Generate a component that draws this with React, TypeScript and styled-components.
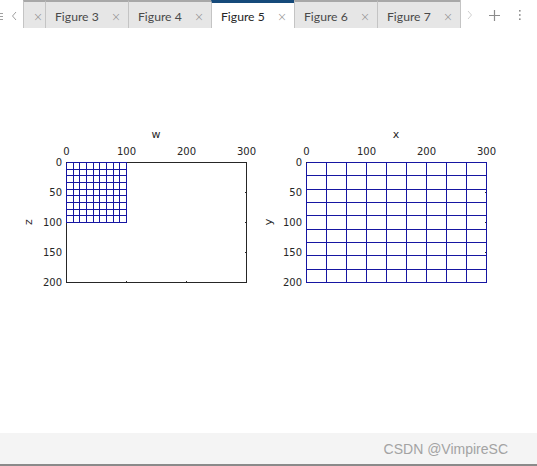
import styled, { createGlobalStyle } from 'styled-components';

const GlobalStyle = createGlobalStyle`
    html, body {
        margin: 0;
        padding: 0;
        background: #ffffff;
    }
    #root {
        height: 100vh;
    }
`;

const Page = styled.div`
    display: flex;
    flex-direction: column;
    height: 100%;
    font-family: Lato, 'Noto Sans', sans-serif;
`;

const TabBar = styled.div`
    display: flex;
    align-items: stretch;
    height: 28px;
    flex-shrink: 0;
    background: #ffffff;
`;

const Nav = styled.div`
    display: flex;
    align-items: center;
    width: 23px;
    overflow: hidden;
`;

const Tab = styled.div<{ active?: boolean; width: number }>`
    box-sizing: border-box;
    display: flex;
    align-items: center;
    justify-content: space-between;
    width: ${({ width }) => width}px;
    padding: ${({ active }) => active ? '2px 7px 0 9px' : '3px 7px 0 9px'};
    background: ${({ active }) => active ? '#ffffff' : '#e6e6e6'};
    border-top: ${({ active }) => active ? '3px solid #164a7a' : '2px solid #a8a8a8'};
    border-left: 1px solid #c4c4c4;
    color: ${({ active }) => active ? '#262626' : '#4a4a4a'};
    font-size: 12.2px;
    white-space: nowrap;
`;

const Close = styled.span`
    color: #8c8c8c;
    font-family: 'DejaVu Sans', sans-serif;
    font-size: 12px;
    font-weight: 300;
`;

const BarButton = styled.div<{ width: number; first?: boolean }>`
    display: flex;
    align-items: center;
    justify-content: center;
    width: ${({ width }) => width}px;
    padding-top: 2px;
    border-left: ${({ first }) => first ? '1px solid #c4c4c4' : 'none'};
`;

const Canvas = styled.main`
    flex: 1;
    display: flex;
    align-items: flex-start;
    padding: 97px 0 0 20px;
    background: #ffffff;
`;

const Footer = styled.footer`
    display: flex;
    align-items: center;
    justify-content: flex-end;
    height: 31px;
    flex-shrink: 0;
    padding-right: 29px;
    background: #f4f4f4;
    border-bottom: 2px solid #8a8a8a;
    color: #a3a3a3;
    font-family: 'Liberation Sans', Arial, sans-serif;
    font-size: 14px;
`;

const ChartSvg = styled.svg`
    display: block;
    font-family: 'DejaVu Sans', sans-serif;
    font-size: 10px;

    text {
        fill: #262626;
    }
`;

const K = 0.6;
const X0 = 46;
const Y0 = 37;

const px = (v: number) => Math.round(X0 + v * K) + 0.5;
const py = (v: number) => Math.round(Y0 + v * K) + 0.5;

const linspace = (a: number, b: number, n: number) =>
    Array.from({ length: n }, (_, i) => a + (b - a) * i / (n - 1));

interface ChartProps {
    title: string;
    yLabel: string;
    xMax: number;
    yMax: number;
}

function Chart({ title, yLabel, xMax, yMax }: ChartProps) {
    const xs = linspace(0, xMax, 10);
    const ys = linspace(0, yMax, 10);
    const xTicks = [0, 100, 200, 300];
    const yTicks = [0, 50, 100, 150, 200];
    const left = px(0), right = px(300), top = py(0), bottom = py(200);

    return (
        <ChartSvg width={240} height={165} viewBox="0 0 240 165">
            <text x={136} y={13} textAnchor="middle" fontSize={11}>{title}</text>
            {xTicks.map(t => (
                <text key={t} x={px(t)} y={30} textAnchor="middle">{t}</text>
            ))}
            {yTicks.map(t => (
                <text key={t} x={42} y={py(t) + 3.5} textAnchor="end">{t}</text>
            ))}
            {/* axis label, rotated like MATLAB's ylabel */}
            <text
                x={0}
                y={0}
                textAnchor="middle"
                dominantBaseline="central"
                fontSize={11}
                transform="translate(8 97) rotate(-90)"
            >{yLabel}</text>

            <g stroke="#262626" strokeWidth={1} fill="none" shapeRendering="crispEdges">
                <rect x={left} y={top} width={right - left} height={bottom - top} />
                {xTicks.slice(1, -1).map(t => (
                    <line key={t} x1={px(t)} y1={bottom} x2={px(t)} y2={bottom - 2} />
                ))}
                {yTicks.slice(1, -1).map(t => (
                    <line key={t} x1={right} y1={py(t)} x2={right - 2} y2={py(t)} />
                ))}
            </g>

            <g stroke="#1616a2" strokeWidth={1} fill="none" shapeRendering="crispEdges">
                {xs.map((v, i) => (
                    <line key={'v' + i} x1={px(v)} y1={py(0)} x2={px(v)} y2={py(yMax)} />
                ))}
                {ys.map((v, i) => (
                    <line key={'h' + i} x1={px(0)} y1={py(v)} x2={px(xMax)} y2={py(v)} />
                ))}
            </g>
        </ChartSvg>
    );
}

const tabs = ['Figure 3', 'Figure 4', 'Figure 5', 'Figure 6', 'Figure 7'];

export default function App() {
    return (
        <>
            <GlobalStyle />
            <Page>
                <TabBar>
                    <Nav>
                        <svg width={23} height={28} viewBox="0 0 23 28">
                            <g stroke="#a0a0a0" strokeWidth={1} shapeRendering="crispEdges">
                                <line x1={0} y1={13.5} x2={3} y2={13.5} />
                                <line x1={0} y1={16.5} x2={3} y2={16.5} />
                                <line x1={0} y1={19.5} x2={3} y2={19.5} />
                            </g>
                            <path d="M16 12 L12.5 16 L16 20" stroke="#a0a0a0" strokeWidth={1} fill="none" />
                        </svg>
                    </Nav>
                    <Tab width={22}><Close>×</Close></Tab>
                    {tabs.map(t => (
                        <Tab key={t} width={83} active={t === 'Figure 5'}>
                            {t}
                            <Close>×</Close>
                        </Tab>
                    ))}
                    <BarButton width={18} first>
                        <svg width={8} height={12} viewBox="0 0 8 12">
                            <path d="M2 2 L5.5 6 L2 10" stroke="#d0d0d0" strokeWidth={1} fill="none" />
                        </svg>
                    </BarButton>
                    <BarButton width={30}>
                        <svg width={11} height={11} viewBox="0 0 11 11">
                            <path d="M5.5 0 V11 M0 5.5 H11" stroke="#8c8c8c" strokeWidth={1.2} fill="none" />
                        </svg>
                    </BarButton>
                    <BarButton width={22}>
                        <svg width={4} height={12} viewBox="0 0 4 12">
                            <g fill="#8c8c8c">
                                <rect x={1} y={1} width={1.6} height={1.6} />
                                <rect x={1} y={5.2} width={1.6} height={1.6} />
                                <rect x={1} y={9.4} width={1.6} height={1.6} />
                            </g>
                        </svg>
                    </BarButton>
                </TabBar>

                <Canvas>
                    <Chart title="w" yLabel="z" xMax={100} yMax={100} />
                    <Chart title="x" yLabel="y" xMax={300} yMax={200} />
                </Canvas>

                <Footer>CSDN @VimpireSC</Footer>
            </Page>
        </>
    );
}
